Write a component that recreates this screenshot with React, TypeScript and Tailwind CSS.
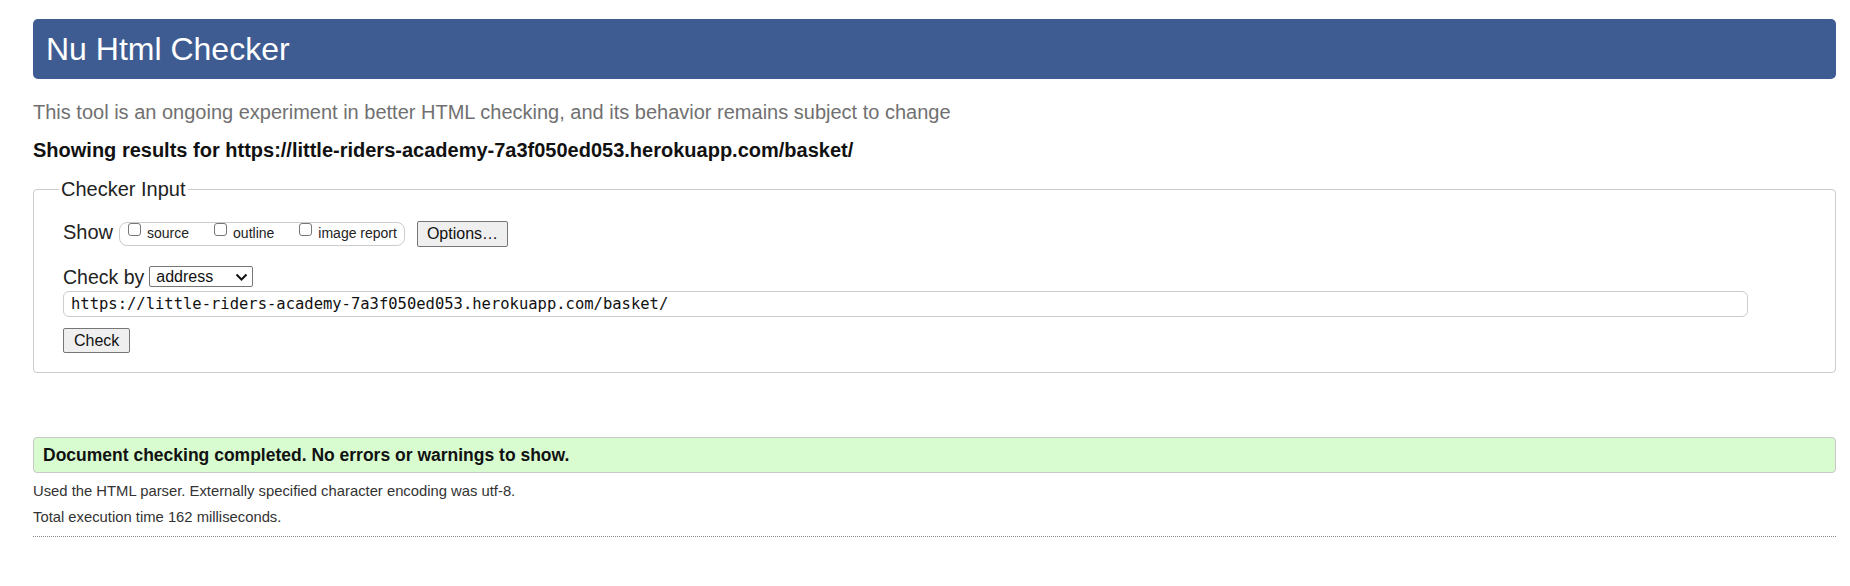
import React from 'react';

const checkedUrl = 'https://little-riders-academy-7a3f050ed053.herokuapp.com/basket/';

function ShowOption({ label }: { label: string }) {
  return (
    <label className="flex items-start">
      <input
        type="checkbox"
        className="appearance-none w-[13px] h-[13px] border border-[#767676] rounded-[3px] bg-white"
      />
      <span className="ml-[6px] mt-[3px] text-[14px] leading-[14px] text-[#222]">{label}</span>
    </label>
  );
}

export default function App() {
  return (
    <div className="min-h-screen bg-white pt-[19px] pl-[33px] pr-[14px] font-['Liberation_Sans',Arial,sans-serif] text-[#222]">
      {/* Header */}
      <div className="h-[60px] bg-[#3e5c92] rounded-[5px] flex items-center pl-[13px]">
        <h1 className="text-[32px] leading-[32px] text-white font-normal">Nu Html Checker</h1>
      </div>

      <p className="mt-[23px] text-[20px] leading-[20px] text-[#707070]">
        This tool is an ongoing experiment in better HTML checking, and its behavior remains subject to change
      </p>

      <p className="mt-[18px] text-[20px] leading-[20px] font-bold text-[#111]">
        Showing results for {checkedUrl}
      </p>

      {/* Checker input */}
      <fieldset className="mt-[17px] border border-[#cccccc] rounded-[4px]">
        <legend className="ml-[25px] px-[2px] text-[20px] leading-[24px] text-[#222]">Checker Input</legend>
        <div className="pl-[29px] pt-[20px] pb-[19px]">
          <div className="flex items-start h-[26px]">
            <span className="mt-[1px] text-[20px] leading-[20px]">Show</span>
            <div className="ml-[6px] mt-[1px] h-[24px] flex items-start gap-[25px] pl-[8px] pr-[7px] border border-[#cccccc] rounded-[8px]">
              <ShowOption label="source" />
              <ShowOption label="outline" />
              <ShowOption label="image report" />
            </div>
            <button className="ml-[12px] h-[26px] px-[9px] bg-[#efefef] border border-[#767676] rounded-[2px] text-[16px] leading-[16px] text-[#111]">
              Options…
            </button>
          </div>

          <div className="mt-[19px] flex items-start">
            <span className="mt-[1px] text-[19.5px] leading-[20px]">Check by</span>
            <div className="ml-[5px] w-[104px] h-[21px] flex items-center justify-between pl-[6px] pr-[4px] border border-[#767676] rounded-[2px] bg-white">
              <span className="text-[16px] leading-[16px] text-[#111]">address</span>
              <svg width="13" height="8" viewBox="0 0 13 8" fill="none">
                <path d="M1.5 1.5 L6.5 6.5 L11.5 1.5" stroke="#111" strokeWidth="2" />
              </svg>
            </div>
          </div>

          <div className="mt-[4px] w-[1685px] h-[26px] flex items-center pl-[7px] border border-[#cccccc] rounded-[6px] bg-white">
            <span className="font-['DejaVu_Sans_Mono',monospace] text-[15.5px] leading-[16px] text-[#111]">{checkedUrl}</span>
          </div>

          <button className="mt-[11px] h-[25px] px-[10px] bg-[#efefef] border border-[#767676] rounded-[2px] text-[16px] leading-[16px] text-[#111]">
            Check
          </button>
        </div>
      </fieldset>

      {/* Result */}
      <div className="mt-[64px] h-[36px] flex items-center pl-[9px] bg-[#d8fcd0] border border-[#c8c8c8] rounded-[4px]">
        <span className="text-[17.5px] leading-[18px] font-bold text-[#111]">
          Document checking completed. No errors or warnings to show.
        </span>
      </div>

      <p className="mt-[11px] text-[14.8px] leading-[15px] text-[#333]">
        Used the HTML parser. Externally specified character encoding was utf-8.
      </p>
      <p className="mt-[11px] text-[14.8px] leading-[15px] text-[#333]">Total execution time 162 milliseconds.</p>

      <div className="mt-[11px] border-t border-dotted border-[#888]" />
    </div>
  );
}
